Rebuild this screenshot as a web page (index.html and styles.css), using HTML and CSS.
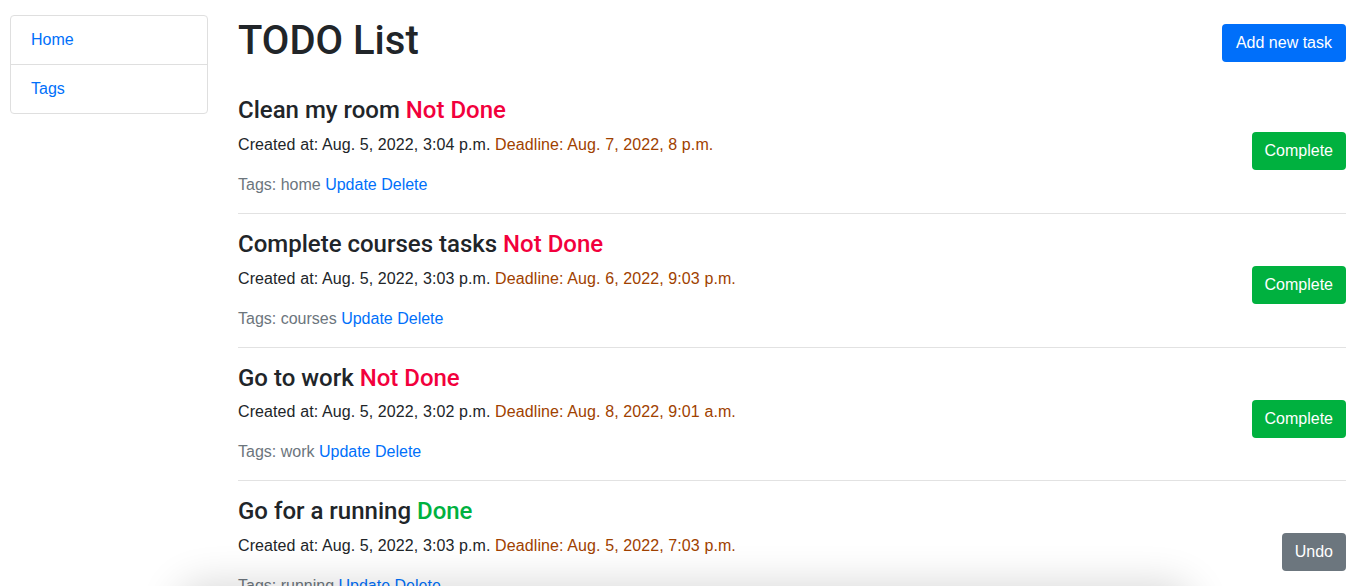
FILE: index.html
```html
<!DOCTYPE html>
<html lang="en">
<head>
<meta charset="utf-8">
<title>TODO List</title>
<link rel="stylesheet" href="styles.css">
</head>
<body>
<div class="page">
  <aside class="sidebar">
    <ul class="list-group">
      <li class="list-group-item"><a href="#">Home</a></li>
      <li class="list-group-item"><a href="#">Tags</a></li>
    </ul>
  </aside>
  <main class="main">
    <div class="header">
      <h1>TODO List</h1>
      <a href="#" class="btn btn-primary btn-add">Add new task</a>
    </div>

    <div class="task">
      <div class="task-body">
        <h4 class="task-title">Clean my room <span class="status-not">Not Done</span></h4>
        <p class="meta">Created at: Aug. 5, 2022, 3:04 p.m. <span class="deadline">Deadline: Aug. 7, 2022, 8 p.m.</span></p>
        <p class="tags">Tags: home <a href="#">Update</a> <a href="#">Delete</a></p>
      </div>
      <a href="#" class="btn btn-success task-btn">Complete</a>
    </div>
    <hr>

    <div class="task">
      <div class="task-body">
        <h4 class="task-title">Complete courses tasks <span class="status-not">Not Done</span></h4>
        <p class="meta">Created at: Aug. 5, 2022, 3:03 p.m. <span class="deadline">Deadline: Aug. 6, 2022, 9:03 p.m.</span></p>
        <p class="tags">Tags: courses <a href="#">Update</a> <a href="#">Delete</a></p>
      </div>
      <a href="#" class="btn btn-success task-btn">Complete</a>
    </div>
    <hr>

    <div class="task">
      <div class="task-body">
        <h4 class="task-title">Go to work <span class="status-not">Not Done</span></h4>
        <p class="meta">Created at: Aug. 5, 2022, 3:02 p.m. <span class="deadline">Deadline: Aug. 8, 2022, 9:01 a.m.</span></p>
        <p class="tags">Tags: work <a href="#">Update</a> <a href="#">Delete</a></p>
      </div>
      <a href="#" class="btn btn-success task-btn">Complete</a>
    </div>
    <hr>

    <div class="task">
      <div class="task-body">
        <h4 class="task-title">Go for a running <span class="status-done">Done</span></h4>
        <p class="meta">Created at: Aug. 5, 2022, 3:03 p.m. <span class="deadline">Deadline: Aug. 5, 2022, 7:03 p.m.</span></p>
        <p class="tags">Tags: running <a href="#">Update</a> <a href="#">Delete</a></p>
      </div>
      <a href="#" class="btn btn-secondary task-btn">Undo</a>
    </div>
    <hr>
  </main>
</div>
<div class="float-shadow"></div>
</body>
</html>
```
FILE: styles.css
```css
* { box-sizing: border-box; }

html, body {
  margin: 0;
  padding: 0;
  background: #fff;
}

body {
  font-family: "Liberation Sans", Arial, Helvetica, sans-serif;
  font-size: 16px;
  line-height: 1.5;
  color: #212529;
}

a {
  color: #0070fa;
  text-decoration: none;
}

.page {
  display: flex;
  align-items: flex-start;
  padding: 15px 11px 0 10px;
  gap: 30px;
}

.sidebar {
  width: 198px;
  flex: 0 0 198px;
}

.list-group {
  list-style: none;
  margin: 0;
  padding: 0;
  border: 1px solid #dfdfdf;
  border-radius: 4px;
}

.list-group-item {
  padding: 12px 20px;
  line-height: 24px;
}

.list-group-item + .list-group-item {
  border-top: 1px solid #dfdfdf;
}

.main {
  flex: 1;
  min-width: 0;
}

.header {
  display: flex;
  justify-content: space-between;
  align-items: flex-start;
  margin-bottom: 31px;
}

h1 {
  margin: 0;
  padding-top: 2px;
  font-family: Roboto, "Liberation Sans", Arial, sans-serif;
  font-size: 40px;
  font-weight: 500;
  line-height: 48px;
}

.btn {
  display: inline-block;
  padding: 6px 12px;
  font-size: 16px;
  line-height: 24px;
  border-radius: 4px;
  color: #fff;
  border: 1px solid transparent;
}

.btn-add { margin-top: 9px; padding: 6px 13px; }

.btn-primary { background: #006ffa; }
.btn-success { background: #00b13f; }
.btn-secondary { background: #6c767e; }

.task {
  display: flex;
  justify-content: space-between;
  align-items: flex-start;
}

.task-title {
  margin: 0 0 8px;
  font-family: Roboto, "Liberation Sans", Arial, sans-serif;
  font-size: 24px;
  font-weight: 500;
  line-height: 28.8px;
}

.status-not { color: #f2003c; }
.status-done { color: #00b13f; }

.meta {
  margin: 0 0 16px;
  letter-spacing: 0.1px;
}

.deadline { color: #a04100; }

.tags {
  margin: 0;
  color: #6c757d;
}

.task-btn {
  margin-top: 36px;
}

hr {
  margin: 16px 0;
  border: 0;
  border-top: 1px solid #e2e2e2;
}

.float-shadow {
  position: fixed;
  left: 190px;
  width: 990px;
  top: 596px;
  height: 60px;
  border-radius: 12px;
  background: #fff;
  box-shadow: 0 0 40px 12px rgba(0, 0, 0, 0.16);
}
```
